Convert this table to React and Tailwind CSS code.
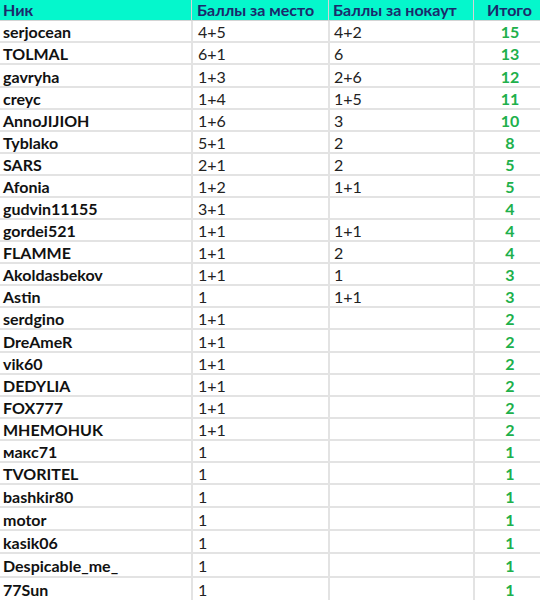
import React from "react";

const rows = [
  ["serjocean", "4+5", "4+2", "15", "h-[22px]"],
  ["TOLMAL", "6+1", "6", "13", "h-[22px]"],
  ["gavryha", "1+3", "2+6", "12", "h-[23px]"],
  ["creyc", "1+4", "1+5", "11", "h-[22px]"],
  ["AnnoJIJIOH", "1+6", "3", "10", "h-[22px]"],
  ["Tyblako", "5+1", "2", "8", "h-[22px]"],
  ["SARS", "2+1", "2", "5", "h-[22px]"],
  ["Afonia", "1+2", "1+1", "5", "h-[22px]"],
  ["gudvin11155", "3+1", "", "4", "h-[22px]"],
  ["gordei521", "1+1", "1+1", "4", "h-[22px]"],
  ["FLAMME", "1+1", "2", "4", "h-[22px]"],
  ["Akoldasbekov", "1+1", "1", "3", "h-[22px]"],
  ["Astin", "1", "1+1", "3", "h-[22px]"],
  ["serdgino", "1+1", "", "2", "h-[22px]"],
  ["DreAmeR", "1+1", "", "2", "h-[23px]"],
  ["vik60", "1+1", "", "2", "h-[22px]"],
  ["DEDYLIA", "1+1", "", "2", "h-[22px]"],
  ["FOX777", "1+1", "", "2", "h-[22px]"],
  ["MHEMOHUK", "1+1", "", "2", "h-[22px]"],
  ["макс71", "1", "", "1", "h-[22px]"],
  ["TVORITEL", "1", "", "1", "h-[22px]"],
  ["bashkir80", "1", "", "1", "h-[23px]"],
  ["motor", "1", "", "1", "h-[23px]"],
  ["kasik06", "1", "", "1", "h-[23px]"],
  ["Despicable_me_", "1", "", "1", "h-[24px]"],
  ["77Sun", "1", "", "1", "h-[24px]"],
];

export default function App() {
  return (
    <div
      className="w-[540px] h-[600px] overflow-hidden bg-white"
      style={{ fontFamily: "Lato, 'Open Sans', sans-serif" }}
    >
      <div className="w-[545px]">
        <div className="flex h-[21px] bg-[#05f7cc] text-[#1b2a6b] font-bold text-[16px] leading-none border-b border-[#d4d4d4]">
          <div className="w-[191px] flex items-center pl-[3px]">Ник</div>
          <div className="w-[137px] flex items-center pl-[5px] border-l border-[#d4d4d4]">Баллы за место</div>
          <div className="w-[145px] flex items-center pl-[4px] border-l border-[#d4d4d4]">Баллы за нокаут</div>
          <div className="w-[72px] flex items-center justify-center border-l border-[#d4d4d4]">Итого</div>
        </div>
        {rows.map(([nick, place, ko, total, h], i) => (
          <div key={i} className={`flex ${h} border-b-2 border-[#e3e3e3] text-[16px] leading-none`}>
            <div className="w-[191px] flex items-center pl-[3px] pt-[2px] font-bold text-[#111]">{nick}</div>
            <div className="w-[137px] flex items-center pl-[5px] pt-[2px] border-l-2 border-[#e3e3e3] text-[#222]">{place}</div>
            <div className="w-[145px] flex items-center pl-[4px] pt-[2px] border-l-2 border-[#e3e3e3] text-[#222]">{ko}</div>
            <div className="w-[72px] flex items-center justify-center pt-[2px] border-l-2 border-[#e3e3e3] font-bold text-[#20b04b]">{total}</div>
          </div>
        ))}
      </div>
    </div>
  );
}
